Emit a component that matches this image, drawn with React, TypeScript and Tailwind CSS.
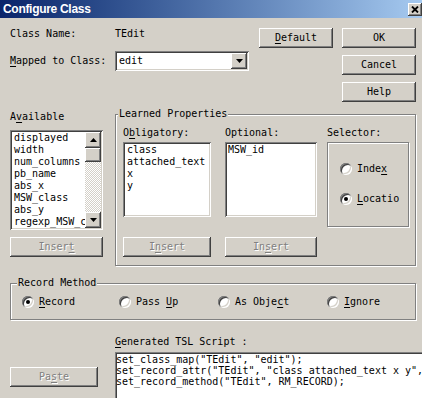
import React from "react";
import clsx from "clsx";

const raised =
  "bg-[#d4d0c8] shadow-[inset_-1px_-1px_0_#404040,inset_1px_1px_0_#ffffff,inset_-2px_-2px_0_#808080,inset_2px_2px_0_#d4d0c8]";
const sunken =
  "bg-white shadow-[inset_1px_1px_0_#808080,inset_-1px_-1px_0_#ffffff,inset_2px_2px_0_#404040,inset_-2px_-2px_0_#d4d0c8]";
const etched = "border border-[#808080] shadow-[inset_1px_1px_0_#ffffff,1px_1px_0_#ffffff]";

function U({ children }: { children: React.ReactNode }) {
  return <span className="underline underline-offset-[2px]">{children}</span>;
}

function Btn({
  children,
  className,
  disabled,
}: {
  children: React.ReactNode;
  className?: string;
  disabled?: boolean;
}) {
  return (
    <div
      className={clsx(
        "flex h-[20px] shrink-0 items-center justify-center",
        raised,
        disabled && "text-[#808080] [text-shadow:1px_1px_0_#ffffff]",
        className
      )}
    >
      {children}
    </div>
  );
}

function Arrow({ up }: { up?: boolean }) {
  return (
    <svg width="7" height="4" viewBox="0 0 7 4">
      <polygon points={up ? "3.5,0 7,4 0,4" : "0,0 7,0 3.5,4"} fill="#000" />
    </svg>
  );
}

function Radio({ checked, children }: { checked?: boolean; children: React.ReactNode }) {
  return (
    <div className="flex h-[12px] items-center gap-[5px]">
      <span className={clsx("flex h-[12px] w-[12px] shrink-0 items-center justify-center rounded-full", sunken)}>
        {checked && <span className="h-[4px] w-[4px] rounded-full bg-black" />}
      </span>
      <span className="whitespace-nowrap">{children}</span>
    </div>
  );
}

function Group({
  label,
  className,
  labelClass = "left-[2px]",
  children,
}: {
  label: string;
  className?: string;
  labelClass?: string;
  children: React.ReactNode;
}) {
  return (
    <div className={clsx("relative shrink-0", etched, className)}>
      <span className={clsx("absolute -top-[7px] bg-[#d4d0c8] px-[1px] whitespace-nowrap", labelClass)}>{label}</span>
      {children}
    </div>
  );
}

const available = ["displayed", "width", "num_columns", "pb_name", "abs_x", "MSW_class", "abs_y", "regexp_MSW_class"];
const obligatory = ["class", "attached_text", "x", "y"];
const script = [
  'set_class_map("TEdit", "edit");',
  'set_record_attr("TEdit", "class attached_text x y", "MSW_id", "location");',
  'set_record_method("TEdit", RM_RECORD);',
];

export default function App() {
  return (
    <div className="h-[398px] w-[422px] overflow-hidden bg-[#d4d0c8] font-['DejaVu_Sans_Mono','Liberation_Mono',monospace] text-[10px] leading-[12px] text-black">
      {/* title bar */}
      <div className="flex h-[18px] items-center justify-between bg-gradient-to-r from-[#0a246a] to-[#a6caf0] pl-[3px]">
        <span className="font-['Liberation_Sans',Arial,sans-serif] text-[12px] font-bold tracking-[-0.3px] text-white">
          Configure Class
        </span>
        <div className={clsx("flex h-[13px] w-[14px] items-center justify-center", raised)}>
          <svg width="8" height="7" viewBox="0 0 8 7">
            <path d="M1 0.5 L7 6.5 M7 0.5 L1 6.5" stroke="#000" strokeWidth="1.8" />
          </svg>
        </div>
      </div>

      {/* top section */}
      <div className="flex pl-[10px] pt-[10px]">
        <div className="w-[239px] shrink-0">
          <div className="flex h-[12px]">
            <span className="w-[105px]">Class Name:</span>
            <span>TEdit</span>
          </div>
          <div className="mt-[11px] flex h-[20px] items-center">
            <span className="w-[105px]">
              <U>M</U>apped to Class:
            </span>
            <div className={clsx("flex h-[20px] w-[134px] items-center justify-between p-[2px]", sunken)}>
              <span className="pl-[2px]">edit</span>
              <div className={clsx("flex h-[16px] w-[16px] items-center justify-center", raised)}>
                <Arrow />
              </div>
            </div>
          </div>
        </div>
        <Btn className="ml-[10px] w-[74px]">
          <span>
            <U>D</U>efault
          </span>
        </Btn>
        <div className="ml-[9px] flex flex-col gap-[7px]">
          <Btn className="w-[74px]">OK</Btn>
          <Btn className="w-[74px]">Cancel</Btn>
          <Btn className="w-[74px]">Help</Btn>
        </div>
      </div>

      {/* middle section */}
      <div className="flex items-start pl-[10px]">
        <div className="w-[93px] shrink-0 pt-[9px]">
          <div>
            A<U>v</U>ailable
          </div>
          <div className={clsx("mt-[7px] flex h-[100px] w-[93px] p-[2px]", sunken)}>
            <div className="min-w-0 flex-1 overflow-hidden pl-[2px]">
              {available.map((a) => (
                <div key={a} className="whitespace-nowrap">
                  {a}
                </div>
              ))}
            </div>
            <div className="flex w-[16px] shrink-0 flex-col">
              <div className={clsx("flex h-[16px] items-center justify-center", raised)}>
                <Arrow up />
              </div>
              <div className={clsx("h-[14px]", raised)} />
              <div className="flex-1 [background-image:repeating-conic-gradient(#ffffff_0_25%,#d4d0c8_0_50%)] [background-size:2px_2px]" />
              <div className={clsx("flex h-[16px] items-center justify-center", raised)}>
                <Arrow />
              </div>
            </div>
          </div>
          <Btn disabled className="mt-[7px] w-[93px]">
            <span>
              Inser<U>t</U>
            </span>
          </Btn>
        </div>

        <Group label="Learned Properties" className="ml-[12px] mt-[12px] h-[152px] w-[301px]">
          <div className="flex pl-[7px] pt-[12px]">
            <div className="w-[88px] shrink-0">
              <div>
                O<U>b</U>ligatory:
              </div>
              <div className={clsx("mt-[3px] h-[75px] p-[2px] pl-[4px]", sunken)}>
                {obligatory.map((o) => (
                  <div key={o}>{o}</div>
                ))}
              </div>
              <Btn disabled className="mt-[20px]">
                <span>
                  I<U>n</U>sert
                </span>
              </Btn>
            </div>
            <div className="ml-[14px] w-[92px] shrink-0">
              <div>Optional:</div>
              <div className={clsx("mt-[3px] h-[75px] p-[2px] pl-[3px]", sunken)}>
                <div>MSW_id</div>
              </div>
              <Btn disabled className="mt-[20px]">
                <span>
                  In<U>s</U>ert
                </span>
              </Btn>
            </div>
            <div className="ml-[10px] w-[82px] shrink-0">
              <div>Selector:</div>
              <div className={clsx("mt-[3px] h-[85px] pl-[12px] pt-[20px]", etched)}>
                <Radio>
                  Inde<U>x</U>
                </Radio>
                <div className="mt-[18px]">
                  <Radio checked>
                    <U>L</U>ocatio
                  </Radio>
                </div>
              </div>
            </div>
          </div>
        </Group>
      </div>

      {/* record method */}
      <Group label="Record Method" labelClass="left-[6px]" className="ml-[10px] mt-[17px] h-[37px] w-[406px]">
        <div className="flex pl-[11px] pt-[12px]">
          <div className="w-[97px] shrink-0">
            <Radio checked>
              <U>R</U>ecord
            </Radio>
          </div>
          <div className="w-[99px] shrink-0">
            <Radio>
              Pass <U>U</U>p
            </Radio>
          </div>
          <div className="w-[109px] shrink-0">
            <Radio>
              As Obje<U>c</U>t
            </Radio>
          </div>
          <Radio>
            <U>I</U>gnore
          </Radio>
        </div>
      </Group>

      {/* script */}
      <div className="flex items-start pl-[10px]">
        <Btn disabled className="mt-[47px] w-[88px]">
          <span>
            Pa<U>s</U>te
          </span>
        </Btn>
        <div className="ml-[17px] mt-[16px] shrink-0">
          <div>
            <U>G</U>enerated TSL Script :
          </div>
          <div className={clsx("mt-[4px] h-[60px] w-[320px] overflow-hidden p-[2px] pl-[1px] leading-[11px]", sunken)}>
            {script.map((s) => (
              <div key={s} className="whitespace-nowrap">
                {s}
              </div>
            ))}
          </div>
        </div>
      </div>
    </div>
  );
}
